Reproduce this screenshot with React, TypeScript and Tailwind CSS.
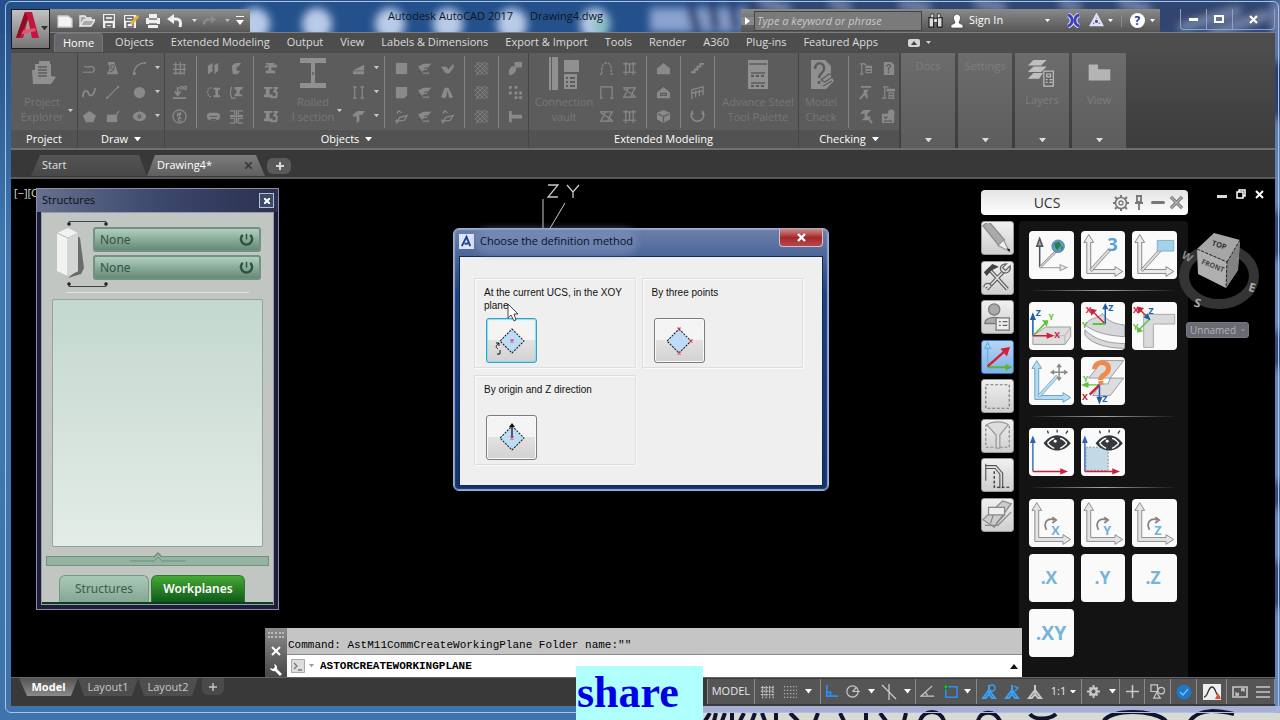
import type { ReactNode } from 'react'

const sans = "font-['Open_Sans','Noto_Sans',sans-serif]"

/* ---------- small helpers ---------- */

function Icon({ children, className = 'size-4', box = '0 0 16 16' }: { children: ReactNode; className?: string; box?: string }) {
  return (
    <svg
      viewBox={box}
      className={`shrink-0 ${className}`}
      fill="none"
      stroke="currentColor"
      strokeWidth="1.3"
      aria-hidden="true"
    >
      {children}
    </svg>
  )
}

function Caret({ className = 'w-2 text-white' }: { className?: string }) {
  return (
    <svg viewBox="0 0 8 5" className={`shrink-0 ${className}`} aria-hidden="true">
      <path d="M0 0h8L4 5z" fill="currentColor" />
    </svg>
  )
}

const fill = { fill: 'currentColor', stroke: 'none' }

/* ---------- ribbon glyphs ---------- */

const glyphs: Record<string, ReactNode> = {
  polyline: <path d="M1 12h9a3 3 0 0 0 0-6C7 6 4 8 3 5" />,
  clip: <><path {...fill} d="M3 1h7l1 3 3 10H2l3-6z" /><circle cx="8" cy="6" r="2" stroke="#5c5c5c" /><path d="M5 12l5-3" stroke="#5c5c5c" /></>,
  arc: <><path d="M2 14C2 7 7 2 14 2" /><path {...fill} d="M1 12h3v3H1zM13 1h2v2h-2z" /></>,
  spline: <path d="M1 13c0-8 5-8 6-4s6 3 7-6" strokeWidth="1.8" />,
  line: <><path d="M2 14L14 2" /><path {...fill} d="M1 13h2v2H1zM13 1h2v2h-2z" /></>,
  circle: <circle {...fill} cx="8" cy="8" r="6" />,
  pentagon: <path {...fill} d="M8 2l7 5-3 7H4L1 7z" />,
  rect: <><path {...fill} d="M2 6h11v8H2z" /><path d="M12 6l3-4" /></>,
  ellipse: <><ellipse {...fill} cx="8" cy="8" rx="7" ry="5" /><circle cx="8" cy="8" r="1.5" stroke="#5c5c5c" /><path d="M8 2v3" /></>,
  grid: <><path d="M4 1v14M9 1v14M13 3v12M1 4h14M1 9h14M1 13h12" /></>,
  level: <><path d="M1 14h14M6 2v8M3 7l3 4 3-4" strokeWidth="1.8" /><circle cx="10" cy="3" r="1.6" /><circle cx="14" cy="3" r="1.6" /></>,
  compass: <><circle cx="8" cy="8" r="7" /><path d="M6 4v3l3-3v3M8 7v3M10 10H7v3h3" /></>,
  plates: <path {...fill} d="M2 5l5-3v9l-5 3zM9 4l4-2v8l-4 4z" />,
  channel: <path {...fill} d="M3 5l4-3h6l-3 4H8v4l4 1-3 3H4z" />,
  beamA: <><path {...fill} d="M8 3h7v2h-2v6h2v2H8v-2h2V5H8z" /><path d="M6 3C1 3 1 8 3 12l3 1" strokeDasharray="2 1" /></>,
  beamB: <><path {...fill} d="M6 2h9l-1 3h-2l-1 5h3v2H6V9h2V5H6z" /><path d="M3 2c-2 4-2 8 0 12h4" /></>,
  tube: <><rect {...fill} x="1" y="4" width="14" height="8" rx="4" /><path d="M4 8h8M5 11h6" stroke="#5c5c5c" /></>,
  split: <path d="M1 2h5v5H1M1 10h5v5H1M15 2h-5v5h5M15 10h-5v5h5M8 1v14M1 8h14" />,
  section1: <path {...fill} d="M3 2h9v2h3v3H9v3h4v3H3v-3h3V7H2V5h4V4H3z" />,
  section2: <><path {...fill} d="M1 2h9v2H7v6h3v3H1v-3h2V4H1z" /><path d="M11 3h4l-3 4 3 1-1 5H8" strokeWidth="2" /></>,
  wedge: <path {...fill} d="M2 10l12-6v6zM2 11h12v3H2z" />,
  ibeams: <path d="M2 2h4M4 2v12M2 14h4M10 2h4M12 2v12M10 14h4" />,
  haunch: <path {...fill} d="M2 6l5-4h8l-3 4H9v7l-3 2V8H2z" />,
  plate: <path {...fill} d="M2 2h12v12H2z" />,
  plateRound: <path {...fill} d="M2 2h12v9l-3 3H2z" />,
  poly: <><path d="M6 9l8-2-3 5-7 1z" /><path d="M1 13h4M3 11v5M3 5l2-3 3 2" /></>,
  fold: <><path {...fill} d="M1 6l6-3h8l-3 4H8l-2 5z" /><path d="M6 13h7M3 9h8" /></>,
  bend: <path {...fill} d="M1 6h6l2 3 5-6 1 3-5 7H6z" />,
  cone: <path {...fill} d="M5 3h4l5 10-4 1-2-8-2 8-5-1z" />,
  mesh: <path d="M1 6l5-5M1 11L11 1M2 15L15 2M6 15l9-9M11 15l4-4M1 10l5 5M1 5l10 10M2 1l13 13M6 1l9 9M11 1l4 4" strokeWidth=".9" />,
  weld: <><path {...fill} d="M7 1h8v6H7z" /><path {...fill} d="M1 10c2-5 5-6 8-2-1 5-4 7-8 7z" /></>,
  dots: <path {...fill} d="M1 1h3v3H1zM7 1h3v3H7zM1 7h3v3H1zM7 7h3v3H7zM12 7h3v3h-3zM7 12h3v3H7zM12 12h3v3h-3z" />,
  bolt: <path {...fill} d="M1 2h3v4h11v4H4v4H1z" />,
  arch: <path d="M3 14H1M3 14V8c0-8 10-8 10 0v6h2" strokeDasharray="3 1" />,
  portal: <path d="M2 14V2h12v12M1 14h3M12 14h3" />,
  frame: <path d="M1 3h14M4 1v14M12 1v14M1 12h14M8 3v9" />,
  brace: <path d="M1 3h14M1 13h14M2 13l5-10M14 3L9 13M2 4l12 8" />,
  house: <path {...fill} d="M8 2l7 6v6H1V8z" />,
  houseHole: <><path {...fill} d="M8 2l7 6v6H1V8z" /><path d="M5 9h6v2H5z" stroke="#5c5c5c" /></>,
  cube: <><path {...fill} d="M8 1l7 3v7l-7 4-7-4V4z" /><path d="M2 5l6 3 6-3M8 8v6" stroke="#5c5c5c" /></>,
  stair: <path {...fill} d="M1 13h5v-3h3V7h3V4h3V2h-5v3H7v3H4v3H1z" />,
  rail: <path d="M2 15V5l12-3v9M2 9l12-3M6 13V6M10 12V5" />,
  cage: <path d="M3 2c-3 3-2 11 5 11s8-8 5-11M1 5h3M12 5h3" strokeWidth="1.6" />,
  listA: <><path d="M2 3h5M4 3v11M2 14h4M6 2l3 3" /><path {...fill} d="M8 5h7v8H8z" /><path d="M9 8h5M9 11h5" stroke="#5c5c5c" /></>,
  pageQ: <><path {...fill} d="M3 1h8l3 3v11H3z" /><path d="M6 6c0-3 5-3 4 0L8 8v2M8 11v2" stroke="#5c5c5c" /></>,
  clash: <><path {...fill} d="M3 1h11v2H3zM6 5h6l-3 3 2 3H6z" /><path d="M2 15l5-6M8 10l2 4" strokeWidth="2" /></>,
  clashI: <><path {...fill} d="M2 5l4-4h8l-4 4v3h4l-3 4H4l3-3V5z" /><path d="M11 10l4 5" strokeWidth="2" /></>,
  listB: <><path d="M4 2v12M1 14h5M2 2h6" /><path {...fill} d="M6 4h9v3H6zM8 8h6v7H8z" /><path d="M9 10h4M9 13h4" stroke="#5c5c5c" /></>,
  info: <><path {...fill} d="M1 5h13v10H1z" /><circle {...fill} cx="11" cy="4" r="3.5" /><path d="M3 8l2 2 2-2M3 13h9" stroke="#5c5c5c" /></>,
}

function Tool({ name, caret = false }: { name: string; caret?: boolean }) {
  return (
    <div className="flex items-center">
      <button aria-label={name} className="flex h-6 w-[23px] items-center justify-center text-[#8a8a8a]">
        <Icon className="size-[15px]">{glyphs[name]}</Icon>
      </button>
      {caret && <Caret className="ml-1 w-[5px] text-[#c8c8c8]" />}
    </div>
  )
}

function Column({ names, caret }: { names: string[]; caret?: boolean }) {
  return (
    <div className="flex flex-col">
      {names.map((n, i) => <Tool key={i} name={n} caret={caret} />)}
    </div>
  )
}

const Divider = () => <div className="mx-[5px] h-[72px] w-px shrink-0 bg-[#858585]" />

function BigTool({ lines, children, className = '', caret = false }: { lines: string[]; children: ReactNode; className?: string; caret?: boolean }) {
  return (
    <button className={`relative flex shrink-0 flex-col items-center text-[11px] leading-[15px] text-[#777777] ${className}`}>
      <Icon className="mb-0.5 h-[36px] w-[40px] text-[#909090]" box="0 0 40 36">{children}</Icon>
      {lines.map((l) => <span key={l} className="whitespace-nowrap">{l}</span>)}
      {caret && <Caret className="absolute right-0 bottom-3 w-[5px] text-[#c8c8c8]" />}
    </button>
  )
}

function Panel({ title, className, caret = false, children }: { title: string; className: string; caret?: boolean; children: ReactNode }) {
  return (
    <section className={`flex shrink-0 flex-col border-r border-[#454545] bg-[#5c5c5c] ${className}`}>
      <div className="flex flex-1 items-start pt-[3px]">{children}</div>
      <div className="flex h-[18px] items-center justify-center gap-1.5 bg-[#525252] text-[11px] text-white">
        {title}
        {caret && <Caret className="w-[7px] text-white" />}
      </div>
    </section>
  )
}

function SlimPanel({ label, children }: { label: string; children?: ReactNode }) {
  return (
    <section className="mr-[3px] flex w-[54px] shrink-0 flex-col items-center bg-linear-to-b from-[#6c6c6c] to-[#5d5d5d] text-[11px] text-[#7e7e7e]">
      <button className="flex flex-1 flex-col items-center pt-[5px]">
        {children}
        <span>{label}</span>
      </button>
      <Caret className="mb-1.5 w-[7px] text-[#dddddd]" />
    </section>
  )
}

function Ribbon() {
  return (
    <div className="flex h-[98px] shrink-0 border-b-2 border-[#6f6f6f] bg-linear-to-b from-[#4c4c4c] to-[#3c3c3c] pt-px">
      <Panel title="Project" className="w-[67px]">
        <BigTool lines={['Project', 'Explorer']} className="w-[62px]" caret>
          <path {...fill} d="M13 8h4V5h11v3h1v12l5 1-5 7H11l-1-14h3z" />
          <path d="M16 11h9M16 14h9M16 17h9M16 20h9" stroke="#5c5c5c" strokeWidth="1.5" />
        </BigTool>
      </Panel>
      <Panel title="Draw" className="w-[87px]" caret>
        <Column names={['polyline', 'spline', 'pentagon']} />
        <Column names={['clip', 'line', 'rect']} />
        <div className="ml-1"><Column names={['arc', 'circle', 'ellipse']} caret /></div>
      </Panel>
      <Panel title="Objects" className="w-[364px]" caret>
        <div className="ml-[3px]"><Column names={['grid', 'level', 'compass']} /></div>
        <Divider />
        <Column names={['plates', 'beamA', 'tube']} />
        <Column names={['channel', 'beamB', 'split']} />
        <Divider />
        <Column names={['section1', 'section2', 'section2']} />
        <BigTool lines={['Rolled', 'I section']} className="ml-0.5 w-[58px]" caret>
          <path {...fill} d="M7 2h26v5H22v20h11v5H7v-5h11V7H7z" />
          <path d="M20 16v3" stroke="#555" />
        </BigTool>
        <div className="ml-[5px]"><Column names={['wedge', 'ibeams', 'haunch']} caret /></div>
        <Divider />
        <Column names={['plate', 'plateRound', 'poly']} />
        <Column names={['fold', 'fold', 'fold']} />
        <Column names={['bend', 'cone', 'poly']} />
        <Divider />
        <Column names={['mesh', 'mesh', 'mesh']} />
        <Divider />
        <Column names={['weld', 'dots', 'bolt']} />
      </Panel>
      <Panel title="Extended Modeling" className="w-[270px]">
        <BigTool lines={['Connection', 'vault']} className="ml-1 w-[62px]">
          <path {...fill} d="M5 1h2v33H5zM8 1h6v33H8zM20 4h15v12H20zM20 18h13v15H20z" />
          <path d="M22 22h2M26 22h5M22 26h2M26 26h5M22 30h2M26 30h5" stroke="#5c5c5c" strokeWidth="2" />
        </BigTool>
        <Column names={['arch', 'portal', 'brace']} />
        <Column names={['frame', 'brace', 'frame']} />
        <Divider />
        <Column names={['house', 'houseHole', 'cube']} />
        <Divider />
        <Column names={['stair', 'rail', 'cage']} />
        <Divider />
        <BigTool lines={['Advance Steel', 'Tool Palette']} className="w-[76px]">
          <path {...fill} d="M10 4h20v29H10z" />
          <path d="M11 8h18M13 17h14M13 27h14" stroke="#5c5c5c" />
          <path d="M13 20h14M13 30h14" stroke="#5c5c5c" strokeWidth="2" strokeDasharray="3 2" />
        </BigTool>
      </Panel>
      <Panel title="Checking" className="w-[101px]" caret>
        <BigTool lines={['Model', 'Check']} className="w-[44px]">
          <path {...fill} d="M10 4h14l6 6v10l3 5-8 8H10z" />
          <path d="M14 13c0-8 10-7 9 0 0 4-5 4-5 9M18 25v3" stroke="#5c5c5c" strokeWidth="2.5" />
          <path d="M20 24l8-6 5 2-9 6zM22 30l9-5" stroke="#5c5c5c" />
        </BigTool>
        <Divider />
        <Column names={['listA', 'clash', 'clashI']} />
        <Column names={['pageQ', 'listB', 'info']} />
      </Panel>
      <div className="w-px shrink-0" />
      <SlimPanel label="Docs" />
      <SlimPanel label="Settings" />
      <SlimPanel label="Layers">
        <Icon className="mb-0.5 h-[32px] w-[34px] text-[#c0c0c0]" box="0 0 34 34">
          <path {...fill} d="M8 2h14l-6 6H2zM8 9h14l-6 6H2zM8 16h10l-4 6H2z" />
          <path d="M19 14h10v16H19z" fill="#646464" />
          <path d="M22 17h4v3h-4zM21 23h2M25 23h3M21 26h2M25 26h3" />
        </Icon>
      </SlimPanel>
      <SlimPanel label="View">
        <Icon className="mb-0.5 h-[32px] w-[34px] text-[#b4b4b4]" box="0 0 34 34">
          <path {...fill} d="M6 7h10v5h13v12H6z" />
        </Icon>
      </SlimPanel>
    </div>
  )
}

/* ---------- title bar ---------- */

function Wallpaper() {
  const blobs = [255, 317, 390, 448, 512, 595]
  return (
    <svg className="absolute inset-0 h-full w-full" aria-hidden="true">
      <defs>
        <filter id="soft"><feGaussianBlur stdDeviation="4" /></filter>
        <linearGradient id="side" x1="0" y1="0" x2="0" y2="1">
          <stop offset="0" stopColor="#244f86" />
          <stop offset=".35" stopColor="#3f78b0" />
          <stop offset="1" stopColor="#3e74ab" />
        </linearGradient>
      </defs>
      <rect width="100%" height="100%" fill="url(#side)" />
      <rect width="100%" height="34" fill="#24508b" />
      <g filter="url(#soft)">
        {blobs.map((x) => <ellipse key={x} cx={x} cy="24" rx="15" ry="16" fill="#b9cbe8" />)}
        <ellipse cx="600" cy="26" rx="8" ry="8" fill="#7fc0c0" />
        <rect x="650" y="8" width="100" height="24" fill="#8ba3cf" />
        <path d="M690 4l8 28M712 2l4 28M732 0l4 30" stroke="#20366c" strokeWidth="9" />
        <rect x="745" width="540" height="34" fill="#30456f" />
        <path d="M760 2l30 8M830 2l20 6M900 4l30 4M975 2l30 6M1060 2l20 6M1120 2l30 8M1180 28l60-18M1210 34l60-20" stroke="#8797bb" strokeWidth="6" />
        <path d="M1277 0v720" stroke="#8797c8" strokeWidth="6" />
        <path d="M1278 60v60M1278 210v50M1278 330v40M1278 480v30M1278 560v50" stroke="#1c2458" strokeWidth="7" />
      </g>
      <rect x="703" y="706" width="580" height="7" fill="#a7b0d4" />
      <rect x="703" y="713" width="580" height="8" fill="#d8dad4" />
      <path
        d="M705 721l5-8M714 721l2-8M722 721l3-8M732 721v-8M740 721l4-8M752 721l3-8M762 713l3 8M776 713v8M790 713l8 8M818 713l-3 8M840 713l4 8M866 713v8M880 713l6 8M906 713l-2 8M920 721c4-12 20-12 24 0M978 721c2-10 16-12 22 0M1030 714c4 6 20 6 26 0M1104 721c6-12 50-12 62 0M1190 721c10-14 30-10 44-7"
        stroke="#11132f"
        strokeWidth="4"
        fill="none"
      />
    </svg>
  )
}

function QuickAccess() {
  const btn = 'flex w-[22px] items-center justify-center text-[#f0f0f0]'
  return (
    <div className="flex h-[23px] items-center bg-linear-to-b from-[#8f8f8f] to-[#575757] pl-1">
      <button aria-label="New" className={btn}><Icon><path fill="#f4f4f4" stroke="#ccc" d="M1 3h10l4 3v8H1z" /></Icon></button>
      <button aria-label="Open" className={btn}><Icon><path d="M1 13V3h5l1 2h5v2M1 13l4-6h11l-4 6z" fill="#aaa" /></Icon></button>
      <button aria-label="Save" className={btn}><Icon><path {...fill} d="M2 1h12v14H2z" /><path d="M4 3h8v4H4zM5 11h6v3H5z" fill="#ddd" stroke="#555" /></Icon></button>
      <button aria-label="Save As" className={btn}><Icon><path {...fill} d="M1 2h12v13H1z" /><path d="M3 4h7v3H3zM4 10h6v4H4z" stroke="#555" /><path d="M15 3l-7 8" stroke="#e0b040" strokeWidth="3" /></Icon></button>
      <button aria-label="Plot" className={btn}><Icon><path {...fill} d="M4 1h8v4h3v6H1V5h3zM3 12h10v3H3z" /><path d="M4 6h8M4 11h8" stroke="#777" /></Icon></button>
      <button aria-label="Undo" className={btn}><Icon><path d="M5 6h4c5 0 5 4 4 8" strokeWidth="3" /><path {...fill} d="M7 1v10L0 6z" /></Icon></button>
      <Caret className="mx-1.5 w-[5px] text-[#ddd]" />
      <button aria-label="Redo" className="flex w-4 items-center text-[#8a8a8a]"><Icon className="size-[14px]"><path d="M1 12c0-5 3-6 8-6" strokeWidth="3" /><path {...fill} d="M9 1v10l6-5z" /></Icon></button>
      <Caret className="mx-1.5 w-[5px] text-[#bbb]" />
      <button aria-label="Customize" className="mr-1.5 flex flex-col items-center gap-[3px]">
        <span className="h-px w-2 bg-white" />
        <Caret className="w-2 text-white" />
      </button>
    </div>
  )
}

function SearchBar() {
  return (
    <div className="flex h-[23px] w-[419px] items-center bg-linear-to-b from-[#8a8a8a] to-[#555] text-[11px] text-white">
      <button aria-label="Collapse search" className="flex w-[13px] justify-center bg-[#888]">
        <Icon className="w-[5px]" box="0 0 5 8"><path d="M0 0l5 4-5 4z" fill="#fff" stroke="none" /></Icon>
      </button>
      <input
        aria-label="Search"
        placeholder="Type a keyword or phrase"
        className="h-5 w-[168px] border border-[#444] bg-[#7a7a7a] px-0.5 text-[11px] italic text-white placeholder:text-[#c8c8c8]"
      />
      <button aria-label="Find" className="ml-1 p-0.5">
        <Icon className="size-[15px]"><path d="M1 5h5v10H1zM10 5h5v10h-5z" fill="#ddd" stroke="#222" /><path d="M3 1h3v4H3zM10 1h3v4h-3zM6 6h4v4H6z" fill="#eee" stroke="#222" strokeWidth=".8" /></Icon>
      </button>
      <button className="ml-1 flex items-center gap-1">
        <Icon><path d="M8 1a4 4 0 0 1 3 6l-1 3 4 2v3H2v-3l4-2-1-3a4 4 0 0 1 3-6z" fill="#fff" stroke="#333" strokeWidth=".6" /></Icon>
        Sign In
      </button>
      <Caret className="mr-1 ml-auto w-[5px] text-white" />
      <button aria-label="Exchange" className="ml-3">
        <Icon className="size-[15px]">
          <path d="M2 2c6 2 6 10 0 12M14 2c-6 2-6 10 0 12" stroke="#dfe2ff" strokeWidth="5" />
          <path d="M2 2c6 2 6 10 0 12M14 2c-6 2-6 10 0 12" stroke="#3d41b8" strokeWidth="3" />
        </Icon>
      </button>
      <button aria-label="Stay connected" className="ml-2">
        <Icon className="size-[15px]"><path d="M8 2l6 11H2z" stroke="#dfe2f4" strokeWidth="2.4" /><circle cx="8" cy="9" r="2.4" fill="#4a4f96" stroke="#dfe2f4" /></Icon>
      </button>
      <Caret className="ml-1 w-[5px] text-white" />
      <span className="mx-2 h-3 w-px bg-[#8a8a8a]" />
      <button aria-label="Help" className="flex size-[15px] items-center justify-center rounded-full bg-white text-xs font-bold text-[#2b3c96]">?</button>
      <Caret className="mx-[5px] w-[5px] text-white" />
    </div>
  )
}

const menu = ['Objects', 'Extended Modeling', 'Output', 'View', 'Labels & Dimensions', 'Export & Import', 'Tools', 'Render', 'A360', 'Plug-ins', 'Featured Apps']

function Header() {
  return (
    <header className="relative shrink-0">
      <div className="flex h-8 items-end justify-between">
        <div className="flex w-[239px] justify-end"><QuickAccess /></div>
        <h1 className="flex gap-[17px] pb-2 text-[11px] text-[#0c1524]">
          <span>Autodesk AutoCAD 2017</span>
          <span>Drawing4.dwg</span>
        </h1>
        <div className="flex items-end gap-5">
          <SearchBar />
          <div className="flex h-[21px] w-[95px] self-start rounded-b border border-t-0 border-[#8fa0c4] text-white">
            <button aria-label="Minimize" className="flex w-[26px] items-center justify-center border-r border-[#8fa0c4]">
              <span className="h-[3px] w-[9px] bg-white" />
            </button>
            <button aria-label="Maximize" className="flex w-[26px] items-center justify-center border-r border-[#8fa0c4]">
              <span className="h-2 w-2.5 border-2 border-white" />
            </button>
            <button aria-label="Close" className="flex flex-1 items-center justify-center">
              <Icon className="size-[9px]" box="0 0 9 9"><path d="M1 1l7 7M8 1L1 8" strokeWidth="2.2" /></Icon>
            </button>
          </div>
        </div>
      </div>
      <nav className="flex h-5 items-center border-t border-[#7d7d7d] bg-[#4d4d4d] pl-[43px] text-[11px] text-[#dcdcdc]">
        <button className="h-full rounded-t-sm border border-b-0 border-[#777] bg-[#666] px-2 text-white">Home</button>
        {menu.map((m) => <button key={m} className="ml-[7px] whitespace-nowrap px-[5px]">{m}</button>)}
        <button aria-label="Minimize ribbon" className="ml-[25px] flex h-2 w-3 items-center justify-center rounded-xs bg-[#d5d5d5]">
          <Icon className="w-1.5" box="0 0 6 4"><path d="M0 4l3-4 3 4z" fill="#444" stroke="none" /></Icon>
        </button>
        <Caret className="ml-1.5 w-[5px] text-[#ccc]" />
      </nav>
      {/* application button */}
      <button
        aria-label="Application menu"
        className="absolute top-[9px] left-0 flex h-10 w-[39px] items-start border border-[#1c1c1c] bg-linear-to-b from-[#c2c2c2] to-[#757575] pl-1"
      >
        <svg viewBox="0 0 24 28" className="mt-px h-7 w-6" aria-hidden="true">
          <path d="M9 1h7l7 26h-7l-4-19-5 19H0z" fill="#c2163a" />
          <path d="M4 20l15-3 1 3-17 4z" fill="#e2556c" />
          <path d="M9 1l-9 26 4-1 8-18z" fill="#8f0d25" />
        </svg>
        <Caret className="mt-4 ml-px w-[7px] text-[#333]" />
      </button>
    </header>
  )
}

function FileTabs() {
  return (
    <div className="flex h-[29px] shrink-0 items-end border-b-2 border-[#5a5a5a] bg-[#383838] pb-px text-[11px] text-[#e0e0e0]">
      <button className="ml-5 h-[21px] w-[116px] bg-linear-to-b from-[#545454] to-[#484848] pl-[11px] text-left [clip-path:polygon(0_100%,9px_0,108px_0,100%_100%)]">
        Start
      </button>
      <div className="flex h-[21px] w-[118px] items-center justify-between bg-linear-to-b from-[#7d7d7d] to-[#5e5e5e] pr-[13px] pl-2.5 text-white [clip-path:polygon(0_100%,8px_0,109px_0,100%_100%)]">
        <button>Drawing4*</button>
        <button aria-label="Close Drawing4">
          <Icon className="size-[7px] text-[#3c3c3c]" box="0 0 7 7"><path d="M0 0l7 7M7 0L0 7" strokeWidth="1.8" /></Icon>
        </button>
      </div>
      <button aria-label="New tab" className="mb-0.5 ml-0.5 flex h-4 w-6 items-center justify-center rounded-md bg-[#5a5a5a] pl-0.5 text-[#d8d8d8]">
        <Icon className="size-2" box="0 0 8 8"><path d="M4 0v8M0 4h8" strokeWidth="2" /></Icon>
      </button>
    </div>
  )
}

/* ---------- structures palette ---------- */

function LevelButton() {
  return (
    <button className="flex h-[25px] w-full items-center justify-between rounded-[3px] border-2 border-[#739082] bg-linear-to-b from-[#b0d0bf] to-[#648a75] px-[5px] text-xs text-[#365044]">
      None
      <Icon className="size-[15px] text-[#2c5340]"><path d="M4 3a6 6 0 1 0 8 0" strokeWidth="2.6" /><path d="M8 2v6" strokeWidth="1.6" /></Icon>
    </button>
  )
}

function StructuresPalette() {
  return (
    <section className="absolute top-[9px] left-[25px] flex h-[422px] w-[243px] flex-col border border-[#8f8ba8] bg-[#1c1d38] px-1 pb-1 font-['Noto_Sans',sans-serif]">
      <div className="-mx-1 flex h-[23px] shrink-0 items-center justify-between bg-linear-to-r from-[#66708e] via-[#3c486c] to-[#2b3150] pr-1 pl-[5px]">
        <h2 className="font-['Open_Sans',sans-serif] text-[11px] text-[#0b0d18]">Structures</h2>
        <button aria-label="Close Structures" className="flex size-[15px] items-center justify-center border border-[#b8bfd4] bg-[#3c4a6c] text-white">
          <Icon className="size-1.5" box="0 0 6 6"><path d="M0 0l6 6M6 0L0 6" strokeWidth="2" /></Icon>
        </button>
      </div>
      <div className="flex flex-1 flex-col border border-[#989bab] bg-[#c1c6c3] px-1 pt-[7px]">
        <div className="flex">
          <Icon className="-mr-[19px] ml-2.5 h-[68px] w-[56px] text-[#222]" box="0 0 56 68">
            <path d="M13 4V1.500h37V4M13 64v2.500h37V64" strokeWidth=".8" />
            <circle {...fill} cx="13" cy="4" r="1.800" /><circle {...fill} cx="50" cy="4" r="1.800" />
            <circle {...fill} cx="13" cy="64" r="1.800" /><circle {...fill} cx="50" cy="64" r="1.800" />
            <path d="M12 58l13-4 3-6-4-30-4-3v36z" fill="#222" stroke="none" opacity=".55" />
            <path d="M1 13l11-5 10 5v38l-10 5-11-5z" fill="#f2f2f2" stroke="none" />
            <path d="M1 13l11 5v38M12 18l10-5" stroke="#aaa" strokeWidth=".8" />
            <path d="M12 18l10-5v38l-10 5z" fill="#d2d5d4" stroke="none" />
          </Icon>
          <div className="mt-[7px] mr-2 flex flex-1 flex-col gap-[3px]">
            <LevelButton />
            <LevelButton />
          </div>
        </div>
        <div className="mx-5 mt-1 h-px bg-[#dfe2e0]" />
        <div className="mx-[6px] mt-1.5 flex-1 rounded-[2px] border border-[#93a59b] bg-linear-to-b from-[#c3d8ce] to-[#e4ece8]" />
        <div className="relative mt-[9px] flex h-[10px] justify-center border border-[#6f9380] bg-[#94b3a1]">
          <Icon className="absolute -top-[5px] h-[11px] w-[56px] text-[#6c8f7c]" box="0 0 56 11"><path d="M0 9h24l4-4 4 4h24" strokeWidth="1" /><path d="M24 5l4-4 4 4" fill="#94b3a1" /></Icon>
        </div>
        <div role="tablist" className="-mx-1 mt-[9px] flex gap-0.5 border-b-2 border-[#123d1c] pl-[17px] text-xs">
          <button role="tab" className="h-[27px] w-[90px] rounded-t-md border border-b-0 border-[#6f9b80] bg-linear-to-b from-[#a9c9b6] to-[#84a894] text-[#3e5c4b]">Structures</button>
          <button role="tab" aria-selected="true" className="h-[27px] w-[94px] rounded-t-md border border-b-0 border-[#2a7a2c] bg-linear-to-b from-[#45a935] to-[#0c5a1a] font-semibold text-white">Workplanes</button>
        </div>
      </div>
    </section>
  )
}

/* ---------- dialog ---------- */

function Diamond({ children }: { children?: ReactNode }) {
  return (
    <svg viewBox="0 0 34 30" className="h-[30px] w-[34px]" fill="none" aria-hidden="true">
      <path d="M17 3l12 12-12 12L5 15z" fill="#bcdcf8" stroke="#222" strokeWidth="1.1" strokeDasharray="2 1.200" />
      {children}
    </svg>
  )
}

const cross = (x: number, y: number) => (
  <path key={`${x}-${y}`} d={`M${x - 1.5} ${y - 1.5}l3 3M${x + 1.5} ${y - 1.5}l-3 3`} stroke="#e8305a" strokeWidth="1.200" />
)

const methods = [
  { label: 'At the current UCS, in the XOY plane', art: <Diamond>{cross(17, 15)}<path d="M4 17c-5 4-2 5-1 6M1 17h3v3M5 24v4H2" stroke="#111" /></Diamond> },
  { label: 'By three points', art: <Diamond>{cross(17, 3)}{cross(29, 15)}{cross(17, 27)}</Diamond> },
  { label: 'By origin and Z direction', art: <Diamond><path d="M17 2v13" stroke="#111" strokeWidth="1.300" /><path d="M14 4l3-4 3 4z" fill="#111" />{cross(17, 15)}</Diamond> },
]

function MethodDialog() {
  return (
    <section role="dialog" aria-labelledby="dlg-title" className="absolute top-[49px] left-[442px] w-[376px] rounded-md border border-[#9fb0cf] bg-linear-to-b from-[#6d80ac] via-[#1d4080] via-25% to-[#12336f] px-[5px] pb-1 shadow-[inset_0_0_1px_1px_#8fa8cc]">
      <div className="flex h-[27px] items-start justify-between">
        <div className="flex items-center gap-1.5 pt-1">
          <Icon className="size-[15px]"><path d="M0 0h16v16H0z" fill="#dce6f6" stroke="none" /><path d="M3 13L8 3l4 10M6 10c2 1 4 0 5-1" stroke="#1d4391" strokeWidth="2" /></Icon>
          <h2 id="dlg-title" className="rounded-full bg-[#8093bb]/50 text-[11px] text-[#0a1124] shadow-[0_0_6px_5px_rgba(128,147,187,0.5)]">Choose the definition method</h2>
        </div>
        <button aria-label="Close dialog" className="flex h-[18px] w-11 items-center justify-center rounded-b border border-t-0 border-[#d9bcc4] bg-linear-to-b from-[#cf8a88] via-[#a5262c] to-[#b8474a] text-white">
          <Icon className="size-[9px]" box="0 0 9 9"><path d="M1 1l7 7M8 1L1 8" strokeWidth="2.400" /></Icon>
        </button>
      </div>
      <div className="grid grid-cols-2 gap-x-1.5 gap-y-[7px] border border-[#15294f] bg-[#efefef] pt-[21px] pr-[19px] pb-5 pl-[14px]">
        {methods.map((m, i) => (
          <div key={m.label} className="flex h-[90px] flex-col border border-[#dedede] pt-[7px] pl-[9px] shadow-[inset_1px_1px_0_#fafafa,1px_1px_0_#fafafa]">
            <p className="h-8 font-['Liberation_Sans',Arial,sans-serif] text-[10px] leading-[13px] text-[#111]">{m.label}</p>
            <button
              aria-label={m.label}
              className={`ml-0.5 flex h-[45px] w-[51px] items-center justify-center rounded-[3px] border bg-linear-to-b from-[#f4f4f4] from-50% via-[#e2e2e2] via-50% to-[#d2d2d2] ${i === 0 ? 'border-[#2fa3c6] shadow-[inset_0_0_1px_1px_#8fdcf0]' : 'border-[#7c7c7c] shadow-[inset_0_0_0_1px_#fafafa]'}`}
            >
              {m.art}
            </button>
          </div>
        ))}
      </div>
    </section>
  )
}

/* ---------- UCS palette ---------- */

const axes = (c: string, s: string) => (
  <path d="M6 43V11H3l5-8 5 8h-3v28h25v-3l8 5-8 5v-3z" fill={c} stroke={s} strokeWidth="1" />
)
const diagonal = (s: string, f: string) => <path d="M9 39L28 18l2 2-19 21z" fill={f} stroke={s} strokeWidth=".8" />
const letter = (x: number, y: number, t: string, color: string, size = 9) => (
  <text x={x} y={y} fontSize={size} fontWeight="bold" fill={color} stroke="none" fontFamily="Open Sans, sans-serif">{t}</text>
)
const spin = <path d="M18 31c-4-8 2-13 8-10M24 18l4 3-4 3" stroke="#8c8080" strokeWidth="1.800" />
const eye = (
  <>
    <path d="M15 15c8-11 20-11 28 0-8 10-20 10-28 0z" fill="#35383c" stroke="none" />
    <path d="M19 15c3-4 5-5 7-5M39 15c-3-4-5-5-7-5M19 15c3 3 5 5 7 5M39 15c-3 3-5 5-7 5" stroke="#fff" strokeWidth="1.500" />
    <circle cx="27" cy="13" r="1.500" fill="#fff" stroke="none" />
    <path d="M20 5l-1-3M29 4V1M38 5l2-3" stroke="#35383c" strokeWidth="1.400" />
  </>
)

const tileGroups: { name: string; art: ReactNode }[][] = [
  [
    { name: 'World UCS', art: <><path d="M11 37V14M8 15l3-8 3 8z" stroke="#555" fill="#aaa" strokeWidth="1.600" /><path d="M11 37h22M32 34l7 3-7 3z" stroke="#aaa" fill="#eee" strokeWidth="1.200" /><path d="M11 37l17-17" stroke="#777" strokeWidth="2.500" /><path d="M11 37l17-17" stroke="#ddd" /><circle cx="30" cy="15" r="6.500" fill="#5b9cc0" stroke="#467" strokeWidth=".6" /><path d="M26 12l5-2 2 4-4 5-2-3zM33 15l2 1-2 4z" fill="#2d7d4c" stroke="none" /></> },
    { name: '3 point UCS', art: <>{axes('#ececec', '#858585')}{diagonal('#777', '#ddd')}{letter(27, 20, '3', '#5aa2d6', 19)}</> },
    { name: 'Object UCS', art: <>{axes('#ececec', '#858585')}{diagonal('#777', '#ddd')}<path d="M26 9h17v11H26z" fill="#a4d3e8" stroke="#6aa5c0" strokeWidth=".8" /></> },
  ],
  [
    { name: 'Beam UCS', art: <><path d="M4 34l13-9h26v10l-6 8H4z" fill="#ddd" stroke="#888" strokeWidth=".8" /><path d="M4 34h33l6-9M37 34v9" stroke="#aaa" strokeWidth=".8" /><path d="M4 34V16M2 17l2-5 2 5z" stroke="#1f5fa8" fill="#1f5fa8" strokeWidth="1.600" /><path d="M4 34l13-13M15 19l4 0-1 4z" stroke="#5fc23a" fill="#5fc23a" strokeWidth="1.600" /><path d="M4 34h16M19 32l5 2-5 2z" stroke="#d0203a" fill="#d0203a" strokeWidth="1.600" />{letter(7, 14, 'Z', '#1f5fa8')}{letter(20, 18, 'Y', '#5fc23a')}{letter(26, 36, 'X', '#d0203a')}</> },
    { name: 'Curved beam UCS', art: <><path d="M4 23c6-9 14-6 18-12 6 9 14 11 23 12v12C30 34 16 32 4 23zM4 28c10 10 24 14 41 14v5C26 47 10 42 4 33z" fill="#d6d8dc" stroke="#888" strokeWidth=".8" /><path d="M25 22V6M23 6l2-4 2 4z" stroke="#1f5fa8" fill="#1f5fa8" strokeWidth="1.500" /><path d="M25 22L12 9M15 8l-5-1 1 5z" stroke="#d0203a" fill="#d0203a" strokeWidth="1.500" /><path d="M25 22H12" stroke="#5fc23a" strokeWidth="2" />{letter(28, 9, 'Z', '#1f5fa8')}{letter(5, 11, 'X', '#d0203a')}{letter(1, 26, 'Y', '#5fc23a')}</> },
    { name: 'Corner UCS', art: <><path d="M12 12h32v10H22v24H12z" fill="#d9dadd" stroke="#999" strokeWidth=".8" /><path d="M18 17L9 8M11 6L6 5l1 5z" stroke="#d0203a" fill="#d0203a" strokeWidth="1.500" /><path d="M18 17L8 27M6 26v4l4-1z" stroke="#5fc23a" fill="#5fc23a" strokeWidth="1.500" /><path d="M18 17l-5-2 3-3z" fill="#1f5fa8" stroke="#1f5fa8" />{letter(17, 12, 'Z', '#1f5fa8')}{letter(1, 11, 'X', '#d0203a')}{letter(1, 28, 'Y', '#5fc23a')}</> },
    { name: 'Move UCS', art: <>{axes('#b6dcf2', '#6aa0c4')}{diagonal('#6aa0c4', '#b6dcf2')}<path d="M31 8v14M24 15h14M29 10l2-3 2 3M29 20l2 3 2-3M26 13l-3 2 3 2M36 13l3 2-3 2" stroke="#8a8a8a" strokeWidth="1.500" /></> },
    { name: 'Element UCS', art: <><path d="M8 21L22 3h22L30 21zM30 21l-2 6h-8l-8 12h18l14-18h-9z" fill="#dcdde2" stroke="#888" strokeWidth=".8" /><path d="M14 12c0-10 17-9 14 1-1 5-8 4-8 10" stroke="#f08a4a" strokeWidth="5" /><path d="M18 24h5v4h-5z" fill="#f08a4a" stroke="none" /><path d="M19 28H5M7 26l-5 2 5 2z" stroke="#5fc23a" fill="#5fc23a" strokeWidth="1.500" /><path d="M19 28L9 38" stroke="#d0203a" strokeWidth="2.500" /><path d="M19 28v13M17 41l2 5 2-5z" stroke="#1f5fa8" fill="#1f5fa8" strokeWidth="1.600" />{letter(2, 25, 'Y', '#5fc23a')}{letter(1, 44, 'X', '#b0202a')}{letter(22, 46, 'Z', '#1f5fa8')}</> },
  ],
  [
    { name: 'Show UCS', art: <><path d="M4 44V14M2 14l2-5 2 5z" stroke="#2a66ac" fill="#2a66ac" strokeWidth="1.400" /><path d="M4 44h29M33 42l5 2-5 2z" stroke="#c8203c" fill="#c8203c" strokeWidth="1.600" />{eye}</> },
    { name: 'Show workplane', art: <><path d="M5 19h23v24H5z" fill="#c3d9e5" stroke="#777" strokeWidth=".8" strokeDasharray="2 1.500" /><path d="M4 44V14M2 14l2-5 2 5z" stroke="#2a66ac" fill="#2a66ac" strokeWidth="1.400" /><path d="M4 44h29M33 42l5 2-5 2z" stroke="#c8203c" fill="#c8203c" strokeWidth="1.600" />{eye}</> },
  ],
  [
    { name: 'Rotate X', art: <>{axes('#e4e4e4', '#8c8c8c')}{spin}{letter(23, 36, 'X', '#6fb2dc', 13)}</> },
    { name: 'Rotate Y', art: <>{axes('#e4e4e4', '#8c8c8c')}{spin}{letter(23, 36, 'Y', '#6fb2dc', 13)}</> },
    { name: 'Rotate Z', art: <>{axes('#e4e4e4', '#8c8c8c')}{spin}{letter(23, 36, 'Z', '#6fb2dc', 13)}</> },
    { name: 'X filter', art: letter(12, 30, '.X', '#78b4da', 18) },
    { name: 'Y filter', art: letter(14, 30, '.Y', '#78b4da', 18) },
    { name: 'Z filter', art: letter(14, 30, '.Z', '#78b4da', 18) },
    { name: 'XY filter', art: letter(7, 31, '.XY', '#78b4da', 20) },
  ],
]

const side: { name: string; art: ReactNode; active?: boolean }[] = [
  { name: 'Draw', art: <><path d="M1 3l6-5 17 20-6 6z" fill="#aaa" stroke="#888" /><path d="M17 24l6-6 6 12z" fill="#eee" stroke="#999" /><path d="M26 27l4 1-1 3z" fill="#222" stroke="none" /></> },
  { name: 'Tools', art: <><path d="M8 8l19 21M5 29L24 9" stroke="#555" strokeWidth="4" /><path d="M8 8l19 21M5 29L24 9" stroke="#ddd" strokeWidth="1.800" /><path d="M2 11l9-9 7 3-8 4-5 6z" fill="#444" stroke="none" /><path d="M30 4l-5 5-3-3 4-4c-7 0-8 6-4 9 5 2 9-1 8-7zM2 27c0-5 7-6 8-1" stroke="#666" fill="#ddd" /></> },
  { name: 'Management', art: <><circle cx="13" cy="8" r="6" fill="#aaa" stroke="#777" /><path d="M3 23c0-9 20-9 20 0z" fill="#aaa" stroke="#777" /><path d="M15 17h14v13H15z" fill="#eee" stroke="#777" /><path d="M18 21h2M22 21h5M18 25h2M22 25h5" stroke="#666" /></> },
  { name: 'UCS', active: true, art: <><path d="M6 28V6M3 8l3-6 3 6z" stroke="#6fb2e4" fill="#cfe8fa" strokeWidth="1.500" /><path d="M6 28h22M26 26l4 2-4 2z" stroke="#5bb52e" fill="#5bb52e" strokeWidth="2" /><path d="M6 27L24 11M22 9l6-1-2 6z" stroke="#d51f36" fill="#d51f36" strokeWidth="2.500" /></> },
  { name: 'Selection', art: <path d="M4 4h25v25H4z" stroke="#777" strokeDasharray="3 2" /> },
  { name: 'Filter', art: <><path d="M4 6h25v23H4z" stroke="#888" strokeDasharray="3 2" /><path d="M5 5c6-4 18-4 23 0L19 16v14h-4V16z" fill="#ddd" stroke="#999" /></> },
  { name: 'Section', art: <><path d="M4 6h11l7 8v16M4 9h10l5 6v15M4 4v18" stroke="#555" strokeWidth="1.200" /><path d="M13 12v17h17" stroke="#222" strokeDasharray="3 2" /></> },
  { name: 'Plates', art: <><path d="M1 22L22 2l9 3L13 30z" fill="#ccc" stroke="#888" /><path d="M7 9h17v8H7z" fill="#eee" stroke="#888" /><path d="M12 17l-3 9M24 17l-9 9M3 28h14L31 14" stroke="#888" /></> },
]

function UcsPalette() {
  return (
    <section className="absolute top-[11px] right-[87px] bottom-0 flex w-[207px] flex-col">
      <div className="flex h-[25px] shrink-0 items-center rounded-[4px] bg-linear-to-b from-[#e4e4e4] to-white pr-1 text-[#777]">
        <h2 className="flex-1 text-center text-sm text-[#333]">UCS</h2>
        <button aria-label="Settings">
          <Icon><circle cx="8" cy="8" r="5.500" strokeWidth="1.600" /><circle cx="8" cy="8" r="2" /><path d="M8 0v2M8 14v2M0 8h2M14 8h2M2 2l2 2M12 12l2 2M14 2l-2 2M4 12l-2 2" strokeWidth="2" /></Icon>
        </button>
        <button aria-label="Pin" className="ml-1"><Icon className="h-4 w-3" box="0 0 12 16"><path d="M3 1h6M4 1v6h4V1M2 8h8M6 8v7" strokeWidth="1.800" /></Icon></button>
        <button aria-label="Roll up" className="ml-1.5 h-[3px] w-3.5 rounded-full bg-[#777]" />
        <button aria-label="Close UCS" className="ml-1"><Icon className="size-[15px]"><path d="M2 2l12 12M14 2L2 14" strokeWidth="3.500" /><path d="M2 2l12 12M14 2L2 14" stroke="#bbb" strokeWidth="1.200" /></Icon></button>
      </div>
      <div className="flex flex-1 items-start pt-1.5">
        <div className="flex h-[311px] w-[33px] shrink-0 flex-col justify-between">
          {side.map((s) => (
            <button
              key={s.name}
              aria-label={s.name}
              className={`flex h-[34px] w-[33px] items-center justify-center overflow-hidden rounded-[3px] border ${s.active ? 'border-[#2f72b8] bg-linear-to-b from-[#b7d5f2] to-[#7eb2e6]' : 'border-[#9a9a9a] bg-linear-to-b from-[#f0f0f0] to-[#cfcfcf]'}`}
            >
              <Icon className="size-[31px]" box="0 0 33 33">{s.art}</Icon>
            </button>
          ))}
        </div>
        <div className="ml-[5px] flex flex-1 flex-col self-stretch rounded-t bg-[#131313] pt-2.5 pr-[11px] pl-2.5">
          {tileGroups.map((group, g) => (
            <div key={g}>
              {g > 0 && <div className="my-[11px] h-px bg-linear-to-r from-transparent via-[#a8a8a8] to-transparent" />}
              <div className="grid grid-cols-3 gap-[7px]">
                {group.map((t) => (
                  <button key={t.name} aria-label={t.name} className="flex h-12 items-center justify-center overflow-hidden rounded-[4px] bg-[#fafafa]">
                    <Icon className="h-12 w-full" box="0 0 46 48">{t.art}</Icon>
                  </button>
                ))}
              </div>
            </div>
          ))}
        </div>
      </div>
    </section>
  )
}

/* ---------- drawing area ---------- */

function ViewCube() {
  return (
    <div className="absolute top-[48px] right-[14px] w-[84px]">
      <svg viewBox="0 0 84 84" className="h-[84px] w-[84px]" aria-hidden="true" fontFamily="Open Sans, sans-serif" fontWeight="bold">
        <ellipse cx="42" cy="49" rx="35" ry="28" fill="none" stroke="#343434" strokeWidth="10" />
        <path d="M20 22L37 6l26 7-13 22zM50 35l13-22-2 30-12 18z" fill="#a6a6a6" />
        <path d="M20 22l30 13-1 26-28-14z" fill="#b0b0b0" />
        <path d="M50 35l13-22-2 30-12 18z" fill="#828282" />
        <path d="M20 22l30 13-1 26M50 35l13-22" fill="none" stroke="#222" strokeDasharray="3 1.500" />
        <text x="34" y="20" fontSize="7.500" fill="#333" transform="rotate(18 40 20)">TOP</text>
        <text x="23" y="39" fontSize="7" fill="#444" transform="rotate(22 30 40)">FRONT</text>
        <text x="4" y="33" fontSize="11" fill="#8a8a8a" transform="rotate(30 9 31)">W</text>
        <text x="72" y="65" fontSize="12" fill="#a8a8a8" transform="rotate(15 76 60)">E</text>
        <text x="18" y="80" fontSize="12" fill="#a8a8a8" transform="rotate(15 20 73)">S</text>
      </svg>
    </div>
  )
}

function CommandLine() {
  return (
    <section className="absolute right-[253px] bottom-0 left-[254px] flex h-[49px] font-['Liberation_Mono',monospace] text-[11px] text-black">
      <div className="flex w-[22px] shrink-0 flex-col items-center justify-between bg-linear-to-b from-[#8c8c8c] to-[#484848] pt-1 pb-px text-white">
        <span className="h-1.5 w-4 border-y-2 border-dotted border-[#bbb]" />
        <button aria-label="Close command line"><Icon className="size-2.5" box="0 0 10 10"><path d="M1 1l8 8M9 1L1 9" strokeWidth="2" /></Icon></button>
        <button aria-label="Customize"><Icon className="size-3" box="0 0 12 12"><path {...fill} d="M4 0a4 4 0 0 1 3 5l5 5-2 2-5-5a4 4 0 0 1-5-3l3 1 2-2z" /></Icon></button>
      </div>
      <div className="flex flex-1 flex-col">
        <p className="flex flex-1 items-center border-b border-[#8a8a8a] bg-[#c5c5c5] px-px pt-2">Command: AstM11CommCreateWorkingPlane Folder name:""</p>
        <div className="flex h-[22px] items-center bg-white px-1">
          <Icon className="size-[14px] text-[#777]" box="0 0 14 14"><path d="M.5.5h13v13H.5z" fill="#ddd" stroke="#aaa" strokeWidth="1" /><path d="M3 4l3 3-3 3M7 11h4" /></Icon>
          <Caret className="mx-1 w-[5px] text-[#999]" />
          <input aria-label="Command" defaultValue="ASTORCREATEWORKINGPLANE" className="ml-0.5 flex-1 font-bold outline-none" />
          <Icon className="w-2" box="0 0 8 5"><path d="M0 5l4-5 4 5z" fill="#111" stroke="none" /></Icon>
        </div>
      </div>
    </section>
  )
}

function DrawingArea() {
  return (
    <main className="relative flex-1 bg-black">
      <span className="absolute top-1.5 left-[3px] text-[11px] text-[#ddd]">[−][C</span>
      <svg viewBox="0 0 40 48" className="absolute top-[3px] left-[530px] h-12 w-10" stroke="#c8c8c8" fill="none" aria-label="Z Y axes">
        <path d="M2 17v31M8 48l16-27" />
        <path d="M7 3h10L7 15h10M26 3l6 7 6-7M32 10v6" strokeWidth="1.300" />
      </svg>
      <div className="absolute top-[10px] right-[11px] flex items-center gap-[9px] text-white">
        <button aria-label="Minimize drawing" className="mt-1 h-[3px] w-2.5 bg-[#ddd]" />
        <button aria-label="Restore drawing"><Icon className="size-2.5" box="0 0 10 10"><path d="M3 3V1h6v6H7M1 3h6v6H1z" strokeWidth="1.500" /></Icon></button>
        <button aria-label="Close drawing"><Icon className="size-[9px]" box="0 0 9 9"><path d="M1 1l7 7M8 1L1 8" strokeWidth="2" /></Icon></button>
      </div>
      <StructuresPalette />
      <UcsPalette />
      <ViewCube />
      <button className="absolute top-[143px] right-[26px] flex h-4 w-[63px] items-center justify-between rounded-[3px] border border-[#77777f] bg-[#6a6a72] px-[3px] text-[10px] text-[#b2b2ba]">
        Unnamed <Caret className="w-1 text-[#8c8c94]" />
      </button>
      <CommandLine />
      <MethodDialog />
      {/* pointer */}
      <svg viewBox="0 0 12 19" className="absolute top-[124px] left-[496px] h-[19px] w-3" aria-hidden="true">
        <path d="M1 1v14l3-3 3 6 2-1-2-6h4z" fill="#fff" stroke="#333" strokeWidth=".9" />
      </svg>
    </main>
  )
}

/* ---------- status bar ---------- */

const cell = 'flex h-[25px] items-center border-r border-[#8a8a8a] bg-[#555]'
const sIcon = 'flex w-[23px] items-center justify-center'
const person = <path d="M8 1v5M8 6l-6 8h3l3-4 3 4h3zM8 2v7" strokeWidth="2" />

function StatusBar() {
  return (
    <footer className="flex h-[29px] shrink-0 items-start justify-between border-t border-[#666] bg-[#393939] text-[11px] text-[#c8c8c8]">
      <div className="flex pl-2">
        <button className="h-[18px] w-[59px] bg-linear-to-b from-[#555] to-[#8a8a8a] font-bold text-white [clip-path:polygon(0_0,100%_0,52px_100%,8px_100%)]">Model</button>
        <button className="h-[18px] w-[60px] bg-[#4e4e4e] [clip-path:polygon(0_0,100%_0,54px_100%,6px_100%)]">Layout1</button>
        <button className="h-[18px] w-[60px] bg-[#4e4e4e] [clip-path:polygon(0_0,100%_0,54px_100%,6px_100%)]">Layout2</button>
        <button aria-label="New layout" className="ml-1 flex h-[17px] w-[22px] items-center justify-center rounded-b-md bg-[#4a4a4a]">
          <Icon className="size-2" box="0 0 8 8"><path d="M4 0v8M0 4h8" strokeWidth="1.400" /></Icon>
        </button>
      </div>
      <div className="flex pt-px">
        <button className={`${cell} border-l px-1 text-[#e8e8e8]`}>MODEL</button>
        <div className={`${cell} w-[66px]`}>
          <button aria-label="Grid" className={sIcon}><Icon className="size-[14px]"><path d="M3 1v14M7 1v14M11 1v14M15 1v14M1 3h15M1 7h15M1 11h15" strokeDasharray="2 1" /></Icon></button>
          <button aria-label="Snap" className={sIcon}><Icon className="size-[14px]"><path d="M1 2h15M1 6h15M1 10h15M1 14h15" strokeDasharray="1.500 2" /></Icon></button>
          <Caret className="mx-1 w-[7px] text-white" />
        </div>
        <div className={`${cell} w-[95px]`}>
          <button aria-label="Ortho" className={`${sIcon} text-[#2f8ef2]`}><Icon className="size-[15px]"><path d="M3 1v12h12M3 9h4v4" strokeWidth="1.800" /></Icon></button>
          <button aria-label="Polar" className={sIcon}><Icon className="size-[15px]"><circle cx="8" cy="8" r="6" /><path d="M8 8h8M8 8l4-4" /></Icon></button>
          <Caret className="mx-1 w-[7px] text-white" />
          <button aria-label="Isometric" className={sIcon}><Icon className="size-4"><path d="M8 0v16M1 1l14 14" /></Icon></button>
          <Caret className="mx-1 w-[7px] text-white" />
        </div>
        <div className={`${cell} w-[61px]`}>
          <button aria-label="Object snap tracking" className={sIcon}><Icon className="size-[15px]"><path d="M15 13H1L13 2M6 9l2 3" /></Icon></button>
          <button aria-label="Object snap" className={`${sIcon} text-[#2f8ef2]`}><Icon className="size-[15px]"><path d="M3 3h12v11H3z" strokeWidth="1.600" /><path d="M1 1h4v4H1z" fill="#2fae3a" stroke="#1b7a26" /></Icon></button>
          <Caret className="ml-0.5 w-[7px] text-white" />
        </div>
        <div className={`${cell} w-[105px]`}>
          <button aria-label="Annotation visibility" className={`${sIcon} text-[#3aa0f4]`}><Icon>{person}<circle cx="11" cy="4" r="3" /></Icon></button>
          <button aria-label="Auto scale" className={`${sIcon} text-[#3aa0f4]`}><Icon>{person}<path d="M10 2l4 2-3 3" /></Icon></button>
          <button aria-label="Annotation" className={sIcon}><Icon>{person}</Icon></button>
          <button className="flex flex-1 items-center justify-center gap-1 text-[#e8e8e8]">1:1 <Caret className="w-[6px] text-white" /></button>
        </div>
        <div className={`${cell} w-[38px]`}>
          <button aria-label="Workspace" className={sIcon}><Icon className="size-[13px]"><circle cx="8" cy="8" r="4" strokeWidth="3" /><path d="M8 0v3M8 13v3M0 8h3M13 8h3M3 3l2 2M11 11l2 2M13 3l-2 2M5 11l-2 2" strokeWidth="2.400" /></Icon></button>
          <Caret className="ml-1 w-[7px] text-white" />
        </div>
        <button aria-label="Annotation monitor" className={`${cell} w-[25px] justify-center`}><Icon className="size-[13px]" box="0 0 13 13"><path d="M6.500 0v13M0 6.500h13" strokeWidth="1.600" /></Icon></button>
        <button aria-label="Isolate" className={`${cell} w-[26px] justify-center`}><Icon className="size-[15px]"><path d="M1 1h7v7H1z" /><circle cx="12" cy="7" r="3.500" /><path d="M7 9l4 6H4z" /></Icon></button>
        <button aria-label="Hardware" className={`${cell} w-[26px] justify-center`}><Icon><circle cx="8" cy="8" r="7.500" fill="#1e78c8" stroke="none" /><path d="M4 8l3 3 5-6" stroke="#7fc0f4" /></Icon></button>
        <button aria-label="Performance" className={`${cell} w-[30px] justify-center`}><Icon className="h-4 w-[18px]" box="0 0 18 16"><path d="M0 0h18v16H0z" fill="#eee" stroke="none" /><path d="M1 13c4 0 4-10 8-10s3 8 8 10" stroke="#333" /><path d="M12 15l3-6 3 6z" fill="#e2502a" stroke="none" /></Icon></button>
        <div className={`${cell} pl-px`}>
          <button aria-label="Clean screen" className={sIcon}><Icon className="h-3 w-4" box="0 0 16 12"><path d="M1 1h14v10H1z" strokeWidth="1.600" /><path d="M9 5l3-2M12 6V3H9M7 7L4 9M4 6v3h3" /></Icon></button>
          <button aria-label="Menu" className={sIcon}><Icon className="h-3 w-3.5" box="0 0 14 12"><path d="M0 1h14M0 6h14M0 11h14" strokeWidth="1.600" /></Icon></button>
        </div>
      </div>
    </footer>
  )
}

export default function App() {
  return (
    <div className={`relative h-screen w-full overflow-hidden bg-[#3e74ab] ${sans}`}>
      <Wallpaper />
      <div className="absolute top-px right-px bottom-[7px] left-[5px] rounded-t-md rounded-b-md border border-[#a9c4e2]" />
      <div className="relative flex h-full flex-col pr-[5px] pb-[14px] pl-[11px]">
        <Header />
        <Ribbon />
        <FileTabs />
        <DrawingArea />
        <StatusBar />
      </div>
      <div className="absolute bottom-0 left-[576px] flex h-[54px] w-[127px] items-center bg-[#b0ffff] pl-px font-['Liberation_Serif',serif] text-[44px] leading-none font-bold text-[#0000e6]">
        share
      </div>
    </div>
  )
}
